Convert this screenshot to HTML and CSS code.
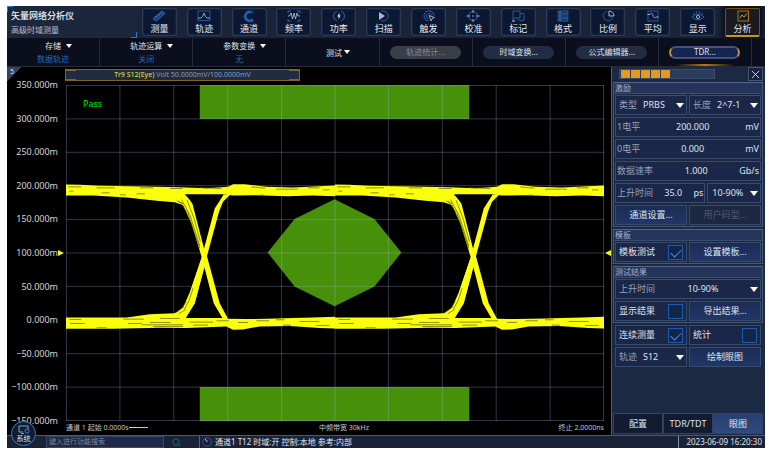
FILE: index.html
```html
<!DOCTYPE html>
<html lang="zh-CN">
<head>
<meta charset="utf-8">
<title>矢量网络分析仪</title>
<link rel="stylesheet" href="styles.css">
</head>
<body>
<div class="app">
  <header class="topbar">
    <div class="brand">
      <h1>矢量网络分析仪</h1>
      <p>高级时域测量</p>
    </div>
    <nav class="tools">
      <button class="tool"><svg viewBox="0 0 16 12"><path d="M2 8.500L11 1l3 2.500L5 11z" fill="#173f78" stroke="#3268ae"/><path d="M5 6l1.500 1.500M7.200 4.200l1.500 1.500M9.400 2.400l1.500 1.500" stroke="#4b82c8"/></svg>测量</button>
      <button class="tool"><svg viewBox="0 0 16 12"><rect x="2" y="1" width="12" height="9.500" fill="none" stroke="#28538f"/><path d="M2 8h3l1.500-1.500L8 3l1.800 4L11 8h3" fill="none" stroke="#7fa4d4"/></svg>轨迹</button>
      <button class="tool"><svg viewBox="0 0 16 12"><path d="M12 9.500A4.500 4.500 0 1 1 10.500 2.200" fill="none" stroke="#2160b4" stroke-width="2.600"/><path d="M10 .2l3.500 2.300L10 4z" fill="#173f78"/></svg>通道</button>
      <button class="tool"><svg viewBox="0 0 16 12"><path d="M2 3V1h3M11 1h3v2M2 9v2h3M11 11h3V9" fill="none" stroke="#2a62ad"/><path d="M2 6h1.500L5 3l1.500 6L8 3l1.500 6L11 3l1.200 3H14" fill="none" stroke="#b8c9e4" stroke-width=".8"/></svg>频率</button>
      <button class="tool"><svg viewBox="0 0 16 12"><path d="M6 1.200a5 5 0 0 0 0 9.600M10 1.200a5 5 0 0 1 0 9.600" fill="none" stroke="#2a62ad"/><path d="M8.600 2.500L6.300 6.500h1.400L7.400 9.500 9.700 5.500H8.400z" fill="#dce7f8"/></svg>功率</button>
      <button class="tool"><svg viewBox="0 0 16 12"><path d="M5 1.500a5 5 0 1 1 0 9" fill="none" stroke="#2a62ad"/><path d="M3 2l6 4-6 4z" fill="#a7b7d0"/></svg>扫描</button>
      <button class="tool"><svg viewBox="0 0 16 12"><path d="M7.500 10.800A5 5 0 1 1 13 5.500M7 8.500A2.600 2.600 0 1 1 10.600 5.500" fill="none" stroke="#2b66b4"/><path d="M8 5.500l5.500 2-2.400 1-1 2.500z" fill="#0d1a35" stroke="#b8c9e4" stroke-width=".8"/></svg>触发</button>
      <button class="tool"><svg viewBox="0 0 16 12"><circle cx="8" cy="6" r="4.500" fill="none" stroke="#2a62ad"/><path d="M8 0v3M8 9v3M1.500 6H5M11 6h3.500" stroke="#8faedb"/><circle cx="8" cy="6" r=".7" fill="#b8c9e4"/></svg>校准</button>
      <button class="tool"><svg viewBox="0 0 16 12"><path d="M3 11V1h7v7H3M10 3.500h4v7H9l-2-2" fill="none" stroke="#28589c"/><path d="M2 11h3" stroke="#b8c9e4"/></svg>标记</button>
      <button class="tool"><svg viewBox="0 0 16 12"><path d="M3 1h10v2.500H3zM3 4.800h10v2.500H3zM3 8.600h10v2.500H3z" fill="#123362" stroke="#2a62ad" stroke-width=".8"/><path d="M4 2.200h2M4 6h2M4 9.800h2" stroke="#739bd1" stroke-width=".7"/></svg>格式</button>
      <button class="tool"><svg viewBox="0 0 16 12"><path d="M7 1.500a4.700 4.700 0 1 0 5.500 6" fill="none" stroke="#28589c"/><path d="M9 1v5h5A5 5 0 0 0 9 1z" fill="none" stroke="#a0b4d4"/></svg>比例</button>
      <button class="tool"><svg viewBox="0 0 16 12"><rect x="3" y="1" width="10" height="10" fill="none" stroke="#28589c"/><path d="M2.500 4.500h2.500c1.200-2 2.500-1.500 3 1s2 2.500 3 1.500h2.500" fill="none" stroke="#8faedb"/></svg>平均</button>
      <button class="tool"><svg viewBox="0 0 16 12"><path d="M2 7q6-6 12 0-6 6-12 0zM3 3l1.500 2M6 1l.7 2.500M10 1l-.7 2.500M13 3l-1.500 2" fill="none" stroke="#2a62ad"/><circle cx="8" cy="7" r="1.600" fill="none" stroke="#a0b4d4"/></svg>显示</button>
      <button class="tool active"><svg viewBox="0 0 16 12"><rect x="3" y="1" width="10.500" height="10" fill="none" stroke="#a37a1c"/><path d="M5 8l2-3 2 2 3-3.500" fill="none" stroke="#c49a3c"/></svg>分析</button>
    </nav>
  </header>

  <nav class="submenu">
    <button class="menu"><span class="menu-label">存储 <i class="caret"></i></span><span class="menu-value">数据轨迹</span></button>
    <button class="menu"><span class="menu-label">轨迹运算 <i class="caret"></i></span><span class="menu-value">关闭</span></button>
    <button class="menu"><span class="menu-label">参数变换 <i class="caret"></i></span><span class="menu-value">无</span></button>
    <button class="menu"><span class="menu-label tight">测试 <i class="caret"></i></span></button>
    <div class="slot"><button class="pill" disabled>轨迹统计...</button></div>
    <div class="slot"><button class="pill">时域变换...</button></div>
    <div class="slot"><button class="pill">公式编辑器...</button></div>
    <div class="slot selected"><button class="pill active">TDR...</button></div>
  </nav>

  <main class="workspace">
    <section class="chart">
      <span class="channel">5</span>
      <div class="trace-row"><div class="trace"><b>Tr9 S12(Eye)</b> Volt 50.0000mV/100.0000mV</div></div>
      <div class="plot-row">
        <div class="scale">
          <span>350.000m</span><span>300.000m</span><span>250.000m</span><span>200.000m</span><span>150.000m</span><span>100.000m</span><span>50.000m</span><span>0.000m</span><span>−50.000m</span><span>−100.000m</span><span>−150.000m</span>
        </div>
        <div class="ref"></div>
        <div class="plot">
          <span class="pass">Pass</span>
          <svg viewBox="0 0 539 337" preserveAspectRatio="none">
            <g class="mask">
              <path d="M134 0h270v34H134zM134 303h270v34H134z"/>
              <path d="M202 168L229 134.500 269 114.500 309 134.500 336 168 309 202 269 222 229 202z"/>
            </g>
            <path class="grid" d="M.5 0V337M54 0V337M108 0V337M162 0V337M216 0V337M269.500 0V337M323 0V337M377 0V337M431 0V337M485 0V337M538.500 0V337M0 .5H539M0 34H539M0 67.500H539M0 101H539M0 135H539M0 168.500H539M0 202H539M0 236H539M0 269.500H539M0 303H539M0 336.500H539"/>
            <defs>
              <g id="eye">
                <g class="beam">
                  <path d="M18 43L60 44 120 47 250 49 360 51 440 54 505 50 520 42 555 42 620 50 700 52 827 46V78L760 76 680 78 590 75 520 76 495 73H375L390 88 400 102 440 252 480 400 505 447 560 448 650 446 700 445 760 443 827 441V476L780 475 690 469 600 470 550 479 520 480 500 470 380 475 300 474 160 477 18 477V443L200 443 270 433 345 430 370 413 390 368 426 262 395 160 370 105 345 96 290 92 200 82 100 76 18 76z"/>
                </g>
                <path class="void" d="M378 73H492L465 115 434 240 398 100zM378 445H488L462 400 434 292 405 400z"/>
                <path class="beam" d="M492 73H512L490 95 478 125 440 265 405 400 378 443 362 440 390 370 426 262 465 115z"/>
                <path class="streak" d="M24 50h40M110 53h55M240 53h40M330 55h38M28 63h12M125 68h24M180 74h18M230 71h25M420 52l65 3M575 50l42 4M650 57h65M745 53h35M790 59h20M600 75h12M365 88l26 48 29 92M358 92l27 39 35 104M382 90l21 55 19 70M351 92l20 9M374 418l14-26 12-37M357 432l21-13M350 428l15-12 14-20M28 449h36M30 461h45M190 448h62M205 461h42M245 465h125M270 458h62M280 470h90M300 446h60M390 457h70M400 466h45M470 453h38M535 458h30M590 453h38M650 450h25M670 466h24M720 455h60M770 467h40M110 474h30"/>
              </g>
            </defs>
            <use href="#eye" transform="translate(-6 85.500) scale(.3333)"/>
            <use href="#eye" transform="translate(263.500 85.500) scale(.3333)"/>
          </svg>
        </div>
        <div class="ref end"></div>
      </div>
      <div class="axis">
        <span>通道 1 起始 0.0000s<i class="dash"></i></span><span>中频带宽 30kHz</span><span>终止 2.0000ns</span>
      </div>
    </section>

    <aside class="panel">
      <div class="panel-head">
        <div class="gauge"><i></i><i></i><i></i><i></i><i></i></div>
        <button class="close" aria-label="关闭"><svg viewBox="0 0 10 10"><path d="M1 1l8 8M9 1L1 9"/></svg></button>
      </div>
      <section class="group">
        <h2>激励</h2>
        <div class="rows">
          <div class="row">
            <div class="cell pick"><label for="type">类型</label><select id="type"><option>PRBS</option></select></div>
            <div class="cell pick"><label for="length">长度</label><select id="length"><option>2^7-1</option></select></div>
          </div>
          <div class="cell field"><label for="one">1电平</label><input id="one" value="200.000"><span>mV</span></div>
          <div class="cell field"><label for="zero">0电平</label><input id="zero" value="0.000"><span>mV</span></div>
          <div class="cell field"><label for="rate">数据速率</label><input id="rate" value="1.000"><span>Gb/s</span></div>
          <div class="row rise">
            <div class="cell field"><label for="rise">上升时间</label><input id="rise" value="35.0"><span>ps</span></div>
            <div class="cell pick"><select id="span" aria-label="上升时间范围"><option>10-90%</option></select></div>
          </div>
          <div class="row"><button class="cell action">通道设置...</button><button class="cell action" disabled>用户码型...</button></div>
        </div>
      </section>
      <section class="group">
        <h2>模板</h2>
        <div class="rows">
          <div class="row"><label class="cell check">模板测试<input type="checkbox" checked></label><button class="cell action">设置模板...</button></div>
        </div>
      </section>
      <section class="group">
        <h2>测试结果</h2>
        <div class="rows">
          <div class="cell pick wide"><label for="result">上升时间</label><select id="result"><option>10-90%</option></select></div>
          <div class="row"><label class="cell check">显示结果<input type="checkbox"></label><button class="cell action">导出结果...</button></div>
        </div>
      </section>
      <section class="rows loose">
        <div class="row"><label class="cell check">连续测量<input type="checkbox" checked></label><label class="cell check">统计<input type="checkbox"></label></div>
        <div class="row">
          <div class="cell pick"><label for="track">轨迹</label><select id="track"><option>S12</option></select></div>
          <button class="cell action">绘制眼图</button>
        </div>
      </section>
      <div class="tabs"><button>配置</button><button>TDR/TDT</button><button class="active">眼图</button></div>
    </aside>
  </main>

  <footer class="status">
    <button class="system"><svg viewBox="0 0 12 9"><path d="M5 7H1V1h9v3M3 8.500h3" fill="none" stroke="#8aa0c0"/><circle cx="9" cy="6" r="2" fill="none" stroke="#2f7be0"/></svg>系统</button>
    <input class="search" aria-label="搜索" placeholder="键入进行功能搜索">
    <svg class="lens" viewBox="0 0 10 10"><circle cx="4.500" cy="4.500" r="3.500"/><path d="M7 7l2 2.500"/></svg>
    <div class="state"><svg viewBox="0 0 10 10"><circle cx="5" cy="5" r="4.300" fill="#14213c" stroke="#34598f"/><path d="M3 2l2.500 3" stroke="#c6d2e6"/></svg>通道1 T12 时域:开 控制:本地 参考:内部</div>
    <time>2023-06-09 16:20:30</time>
  </footer>
</div>
</body>
</html>
```

FILE: styles.css
```css
* { box-sizing: border-box; }

body {
  margin: 0;
  padding: 6px 4px 6px 7px;
  background: #fff;
  color: #dfe4ee;
  font: 9px/12px "Noto Sans", "Noto Sans CJK SC", sans-serif;
}

button, input, select {
  margin: 0;
  padding: 0;
  border: 0;
  background: none;
  color: inherit;
  font: inherit;
}

h1, h2, p { margin: 0; font: inherit; }

svg { display: block; }

.app {
  position: relative;
  display: flex;
  flex-direction: column;
  min-height: calc(100vh - 12px);
  background: #000;
}

/* Top bar */
.topbar {
  display: flex;
  height: 32px;
  overflow: hidden;
  background: #1a2338;
}

.brand {
  flex: 0 0 130px;
  padding: 4px;
  background:
    linear-gradient(#2378d6, #2378d6) 0 0 / 6px 1px no-repeat,
    linear-gradient(#2378d6, #2378d6) 0 0 / 1px 6px no-repeat,
    linear-gradient(#2378d6, #2378d6) 100% 100% / 6px 1px no-repeat,
    linear-gradient(#2378d6, #2378d6) 100% 100% / 1px 6px no-repeat,
    #1c263c;
}

.brand h1 { font-weight: 500; color: #f0f3f8; }
.brand p { margin-top: 2px; font-size: 8px; color: #b6bfce; }

.tools {
  flex: 1;
  display: grid;
  grid-template-columns: repeat(14, 1fr);
  justify-items: center;
  padding-top: 2px;
}

.tool {
  display: flex;
  flex-direction: column;
  align-items: center;
  justify-content: flex-end;
  width: 35px;
  height: 28px;
  border: 1px solid #2d3b52;
  border-radius: 2px;
  background: #0c1832;
  color: #e6eaf2;
  box-shadow: inset 0 0 2px #294066;
  line-height: 13px;
}

.tool svg { width: 16px; height: 12px; }

.tool.active {
  height: 29px;
  border-color: #6e5315;
  border-bottom: 2px solid #cb9422;
  background: #1a1a20;
  box-shadow: 0 0 5px 3px #0a0e1a;
}

/* Second level menu */
.submenu {
  display: grid;
  grid-template-columns: repeat(8, 1fr);
  height: 29px;
  padding-right: 13px;
  border-bottom: 1px solid #252a36;
  background: #0b0f1d;
  font-size: 8px;
}

.menu, .slot {
  display: flex;
  flex-direction: column;
  align-items: center;
  justify-content: center;
  border-right: 1px solid #252b3a;
}

.menu { line-height: 13px; }
.menu-label { display: flex; align-items: center; gap: 5px; padding-left: 11px; }
.menu-label.tight { gap: 2px; }
.menu-value { color: #2166b8; }

.caret {
  border: 3px solid transparent;
  border-top: 4px solid #fff;
  border-bottom: 0;
}

.pill {
  width: 71px;
  height: 13px;
  border-radius: 7px;
  background: #222d44;
  line-height: 12px;
}

.pill:disabled { background: #3a3e47; color: #858b96; }

.pill.active {
  border: 2px solid #c2902f;
  border-top-color: #46507a;
  border-bottom-color: #46507a;
  background: #162450;
  line-height: 8px;
}

.slot.selected {
  background: linear-gradient(90deg, transparent, #b37a20, transparent) 50% 100% / 58px 2px no-repeat;
}

/* Chart */
.workspace { flex: 1; display: flex; }

.chart {
  position: relative;
  flex: 1;
  display: flex;
  flex-direction: column;
  min-width: 0;
}

.channel {
  position: absolute;
  top: 0;
  left: 0;
  width: 14px;
  height: 14px;
  padding-left: 3px;
  background: linear-gradient(135deg, #34435c 50%, transparent 50%);
  font-size: 7px;
  line-height: 9px;
}

.trace-row { height: 18px; padding: 2px 0 0 58px; }

.trace {
  width: 235px;
  height: 12px;
  border: 1px solid #80641f;
  background:
    linear-gradient(#80641f, #80641f) 0 0 / 10px 1px no-repeat,
    linear-gradient(#80641f, #80641f) 0 100% / 10px 1px no-repeat,
    linear-gradient(#80641f, #80641f) 100% 0 / 10px 1px no-repeat,
    linear-gradient(#80641f, #80641f) 100% 100% / 10px 1px no-repeat,
    #202c44;
  color: #929aab;
  text-align: center;
  font-size: 7px;
  line-height: 10px;
}

.trace b { font-weight: 500; color: #d4d62a; }

.plot-row { flex: 1; display: flex; }

.scale {
  flex: 0 0 51px;
  display: flex;
  flex-direction: column;
  justify-content: space-between;
  margin: -6px 0;
  text-align: right;
  color: #d6d6d6;
}

.ref {
  align-self: center;
  width: 8px;
  border-left: 6px solid #f5f518;
  border-top: 3px solid transparent;
  border-bottom: 3px solid transparent;
}

.ref.end {
  width: 7px;
  border-left: 0;
  border-right: 6px solid #f5f518;
}

.plot { position: relative; flex: 1; min-width: 0; }
.plot svg { position: absolute; width: 100%; height: 100%; }

.pass {
  position: absolute;
  top: 13px;
  left: 17px;
  color: #00e010;
}

.mask { fill: #479009; }
.grid { fill: none; stroke: #a8b4ec; stroke-opacity: .3; }
.beam { fill: #fbff0c; }
.void { fill: #000; }
.streak { fill: none; stroke: #56580a; stroke-width: 2; }

.axis {
  display: grid;
  grid-template-columns: 1fr 1fr 1fr;
  height: 14px;
  padding: 0 7px 0 59px;
  color: #c2c5cb;
  font-size: 7px;
  line-height: 14px;
}

.axis span:nth-child(2) { padding-left: 18px; text-align: center; }
.axis span:nth-child(3) { text-align: right; }

.dash {
  display: inline-block;
  width: 19px;
  height: 1px;
  background: #dfe02c;
  vertical-align: 2px;
}

/* Settings panel */
.panel {
  flex: 0 0 154px;
  display: flex;
  flex-direction: column;
  gap: 2px;
  padding: 0 2px 1px 1px;
  border-left: 1px solid #4a5a78;
  background: #1c2943;
}

.panel-head {
  display: flex;
  justify-content: space-between;
  height: 15px;
  margin-bottom: -2px;
  padding-left: 6px;
}

.gauge {
  display: flex;
  gap: 1px;
  width: 96px;
  height: 10px;
  margin-top: 2px;
  padding: 0 1px;
  border: 1px solid #3b4b69;
  background: #2c3c5d;
}

.gauge i { width: 9px; background: #e09a1f; }

.close {
  display: grid;
  place-items: center;
  width: 15px;
  height: 14px;
  border: 1px solid #435678;
  background: #16213b;
}

.close svg { width: 9px; height: 9px; fill: none; stroke: #dfe6f2; }

.group {
  border: 1px solid #455878;
  border-top: 0;
}

.group h2 {
  height: 12px;
  padding-left: 1px;
  border-top: 1px solid #54678a;
  border-bottom: 1px solid #3b4c6d;
  background: #24345a;
  color: #a8b2c6;
  font-size: 8px;
  line-height: 10px;
}

.rows {
  display: flex;
  flex-direction: column;
  gap: 2px;
  padding: 1px;
}

.rows.loose { padding: 0 2px; }

.row {
  display: grid;
  grid-template-columns: 1fr 1fr;
  gap: 2px;
}

.row.rise { grid-template-columns: 91fr 54fr; }

.cell {
  display: flex;
  align-items: center;
  min-width: 0;
  height: 20px;
  border: 1px solid #394b6d;
  background: #1a2748;
}

.field { padding: 0 1px; }
.field label, .pick label { flex: none; color: #96a1b8; }

.field input {
  flex: 1;
  width: 0;
  min-width: 0;
  text-align: center;
}

.pick { position: relative; padding: 0 3px; }

.pick select {
  flex: 1;
  min-width: 0;
  height: 100%;
  padding: 0 12px 0 6px;
  appearance: none;
}

.pick select:only-child { padding-left: 1px; }
.pick.wide select { text-align-last: center; }

.pick::after {
  content: "";
  position: absolute;
  right: 2px;
  border: 4px solid transparent;
  border-top: 5px solid #fff;
  border-bottom: 0;
  pointer-events: none;
}

.action {
  justify-content: center;
  background: linear-gradient(#1b2c55, #213768);
}

.action:disabled { background: #1c2841; color: #4f5b72; }

.check { justify-content: space-between; padding: 0 3px; }

.check input {
  width: 15px;
  height: 15px;
  border: 1px solid #1f5ba8;
  background: #14254a;
  appearance: none;
}

.check input:checked::before {
  content: "";
  display: block;
  width: 9px;
  height: 5px;
  margin: 3px 2px;
  border-left: 1px solid #3c8de8;
  border-bottom: 1px solid #3c8de8;
  transform: rotate(-45deg);
}

.check input:checked { display: flex; align-items: flex-start; }
.check input:checked::before { flex: none; }

.tabs {
  display: grid;
  grid-template-columns: repeat(3, 1fr);
  height: 21px;
  margin-top: auto;
}

.tabs button { border: 1px solid #33435f; background: #111b31; }
.tabs .active { background: linear-gradient(#27406f, #30497f); }

/* Status bar */
.status {
  display: flex;
  align-items: center;
  height: 13px;
  padding: 0 3px 0 39px;
  border-top: 1px solid #515866;
  background: #1a2238;
  font-size: 8px;
  line-height: 12px;
}

.system {
  position: absolute;
  left: 4px;
  bottom: 2px;
  display: flex;
  flex-direction: column;
  align-items: center;
  width: 25px;
  height: 25px;
  padding-top: 3px;
  border: 1px solid #3e77bd;
  border-radius: 50%;
  background: #121c30;
  font-size: 7px;
  line-height: 9px;
}

.system svg { width: 12px; height: 9px; }

.search {
  width: 118px;
  height: 12px;
  padding-left: 2px;
  border: 1px solid #34486f;
  background: #1e2a48;
  font-size: 7px;
}

.search::placeholder { color: #7c869a; }

.lens {
  width: 9px;
  height: 9px;
  margin: 0 18px 0 8px;
  fill: none;
  stroke: #1c6d88;
}

.state {
  flex: 1;
  display: flex;
  align-items: center;
  gap: 3px;
  padding-left: 2px;
  border-left: 1px solid #56607a;
}

.state svg { width: 10px; height: 10px; }

.status time { padding-left: 7px; border-left: 1px solid #8a93a5; }
```
